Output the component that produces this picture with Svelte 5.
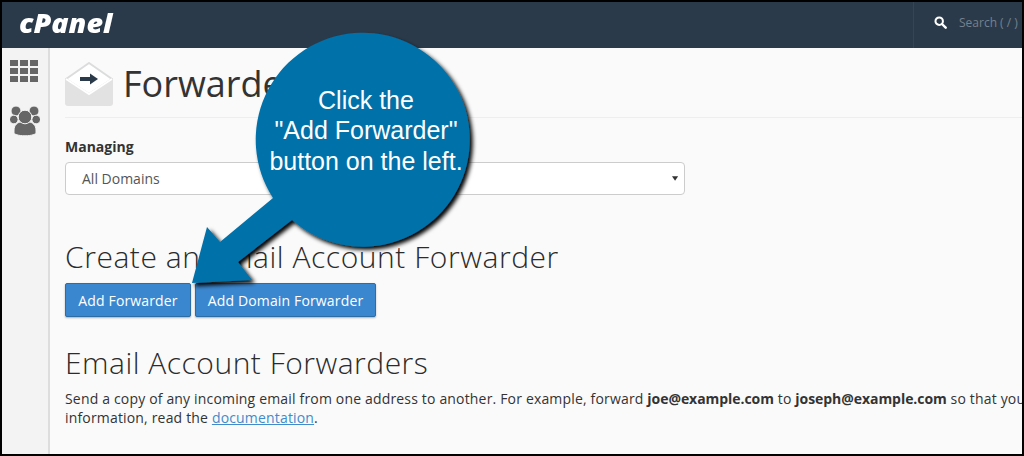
<script>
	let domain = "All Domains";
</script>

<div class="frame">
	<header class="topbar">
		<span class="logo">cPanel</span>
		<div class="search">
			<svg class="search-icon" viewBox="0 0 14 14" width="13" height="13">
				<circle cx="5.6" cy="5.6" r="4" fill="none" stroke="#fff" stroke-width="2.2" />
				<path d="M8.6 8.6 L12.6 12.6" stroke="#fff" stroke-width="2.6" stroke-linecap="round" />
			</svg>
			<span class="search-text">Search ( / )</span>
		</div>
	</header>

	<div class="body">
		<nav class="sidebar">
			<svg viewBox="0 0 29 23" width="29" height="23">
				<g fill="#666">
					<rect x="0" y="0" width="8" height="6" /><rect x="10" y="0" width="8" height="6" /><rect x="20" y="0" width="8" height="6" />
					<rect x="0" y="8" width="8" height="6" /><rect x="10" y="8" width="8" height="6" /><rect x="20" y="8" width="8" height="6" />
					<rect x="0" y="16" width="8" height="6" /><rect x="10" y="16" width="8" height="6" /><rect x="20" y="16" width="8" height="6" />
				</g>
			</svg>
			<svg viewBox="0 0 30 30" width="30" height="30">
				<g fill="#666" stroke="#f3f3f3" stroke-width="1">
					<circle cx="6" cy="5" r="5" />
					<circle cx="24" cy="5" r="5" />
					<circle cx="3.8" cy="13.5" r="4.3" />
					<circle cx="26.2" cy="13.5" r="4.3" />
					<path d="M4 24c0-5 4-8 7-8h8c3 0 7 3 7 8v3c0 1-4 2.8-11 2.8S4 28 4 27z" />
					<circle cx="15" cy="11" r="6.8" />
				</g>
			</svg>
		</nav>

		<main class="content">
			<div class="page-title">
				<svg viewBox="0 0 48 44" width="48" height="44">
					<path d="M0 17 L24 32 L48 17 V41 a3 3 0 0 1 -3 3 H3 a3 3 0 0 1 -3 -3 Z" fill="#e2e2e2" />
					<path d="M1 17 L24 1 L47 17 L24 32 Z" fill="#fff" stroke="#dcdcdc" stroke-width="2" stroke-linejoin="round" />
					<path d="M1 17 L24 32 L47 17" fill="none" stroke="#fff" stroke-width="2" />
					<path d="M15 17 H26" stroke="#2b3a4a" stroke-width="4" />
					<path d="M25 11.5 L33 17 L25 22.5 Z" fill="#2b3a4a" />
				</svg>
				<h1>Forwarders</h1>
			</div>
			<hr />

			<label class="field-label" for="managing">Managing</label>
			<div class="select" id="managing">
				<span>{domain}</span>
				<svg viewBox="0 0 8 5" width="7" height="5"><path d="M0 0H7L3.5 5Z" fill="#333" /></svg>
			</div>

			<h2 class="create">Create an Email Account Forwarder</h2>
			<div class="buttons">
				<button class="first">Add Forwarder</button>
				<button class="second">Add Domain Forwarder</button>
			</div>

			<h2 class="list">Email Account Forwarders</h2>
			<p>
				Send a copy of any incoming email from one address to another. For example, forward <b>joe@example.com</b> to <b>joseph@example.com</b> so that you<br />
				information, read the <a href="#doc">documentation</a>.
			</p>
		</main>
	</div>

	<svg class="callout" viewBox="0 0 1024 456" width="1024" height="456">
		<defs>
			<filter id="shade" x="-20%" y="-20%" width="150%" height="150%">
				<feDropShadow dx="3" dy="3" stdDeviation="2" flood-color="#000" flood-opacity="1" />
			</filter>
		</defs>
		<path
			filter="url(#shade)"
			fill="#0071a9"
			d="M192 283 L207 227 L220 242 L273 198 A107 107 0 1 1 292 220 L238 262 L252 280 Z"
		/>
		<g class="callout-text">
			<text x="366" y="109">Click the</text>
			<text x="366" y="139">"Add Forwarder"</text>
			<text x="366" y="170">button on the left.</text>
		</g>
	</svg>
</div>

<style>
	:global(body) {
		margin: 0;
		background: #000;
	}

	.frame {
		position: relative;
		width: 1024px;
		height: 456px;
		box-sizing: border-box;
		border: 2px solid #000;
		overflow: hidden;
		background: #fafafa;
		font-family: "Open Sans", sans-serif;
		color: #333;
	}

	.topbar {
		height: 46px;
		background: #2b3a4a;
		display: flex;
		justify-content: space-between;
		align-items: center;
	}

	.logo {
		display: inline-block;
		margin: 0 0 4px 17px;
		font-weight: 800;
		font-style: italic;
		font-size: 26px;
		line-height: 36px;
		color: #fff;
		transform: scaleX(1.1);
		transform-origin: left center;
	}

	.search {
		width: 109px;
		height: 46px;
		box-sizing: border-box;
		border-left: 1px solid #344556;
		display: flex;
		align-items: center;
		gap: 12px;
		padding: 0 0 6px 20px;
	}

	.search-text {
		font-size: 12px;
		color: #75818d;
		white-space: nowrap;
	}

	.body {
		display: flex;
		height: 408px;
	}

	.sidebar {
		width: 38px;
		flex: none;
		background: #f3f3f3;
		border-right: 2px solid #ddd;
		display: flex;
		flex-direction: column;
		align-items: flex-start;
		gap: 23px;
		padding: 12px 0 0 8px;
	}

	.content {
		flex: 1;
		padding: 14px 0 0 15px;
		min-width: 0;
		white-space: nowrap;
	}

	.page-title {
		display: flex;
		align-items: center;
		gap: 10px;
		height: 44px;
	}

	h1 {
		margin: 0;
		font-size: 36px;
		font-weight: 400;
		line-height: 44px;
	}

	hr {
		margin: 11px 0 0;
		border: 0;
		border-top: 1px solid #eee;
	}

	.field-label {
		display: block;
		margin-top: 19px;
		font-size: 14px;
		font-weight: 700;
		line-height: 20px;
	}

	.select {
		width: 620px;
		height: 33px;
		margin-top: 5px;
		box-sizing: border-box;
		background: #fff;
		border: 1px solid #ccc;
		border-radius: 4px;
		display: flex;
		justify-content: space-between;
		align-items: center;
		padding: 0 5px 0 16px;
		font-size: 14px;
		color: #555;
	}

	h2 {
		margin: 0;
		font-size: 30px;
		font-weight: 300;
		line-height: 36px;
		letter-spacing: 0.55px;
		color: #2b2b2b;
	}

	.create {
		margin-top: 44px;
	}

	.buttons {
		display: flex;
		gap: 4px;
		margin-top: 8px;
	}

	button {
		height: 34px;
		padding: 0;
		background: #3b87cf;
		border: 1px solid #2e6da4;
		border-radius: 2px;
		box-shadow: 0 1px 2px rgba(0, 0, 0, 0.3);
		color: #fff;
		font-family: inherit;
		font-size: 14px;
		letter-spacing: 0.15px;
	}

	.first {
		width: 126px;
	}

	.second {
		width: 181px;
	}

	.list {
		margin-top: 28px;
		letter-spacing: 0.5px;
	}

	p {
		margin: 8px 0 0;
		font-size: 14px;
		line-height: 19px;
		letter-spacing: 0.17px;
	}

	b {
		letter-spacing: -0.05px;
	}

	a {
		color: #428bca;
		text-decoration: underline;
	}

	.callout {
		position: absolute;
		left: -2px;
		top: -2px;
	}

	.callout-text text {
		font-family: "Liberation Sans", sans-serif;
		font-size: 25px;
		fill: #fff;
		text-anchor: middle;
	}
</style>
